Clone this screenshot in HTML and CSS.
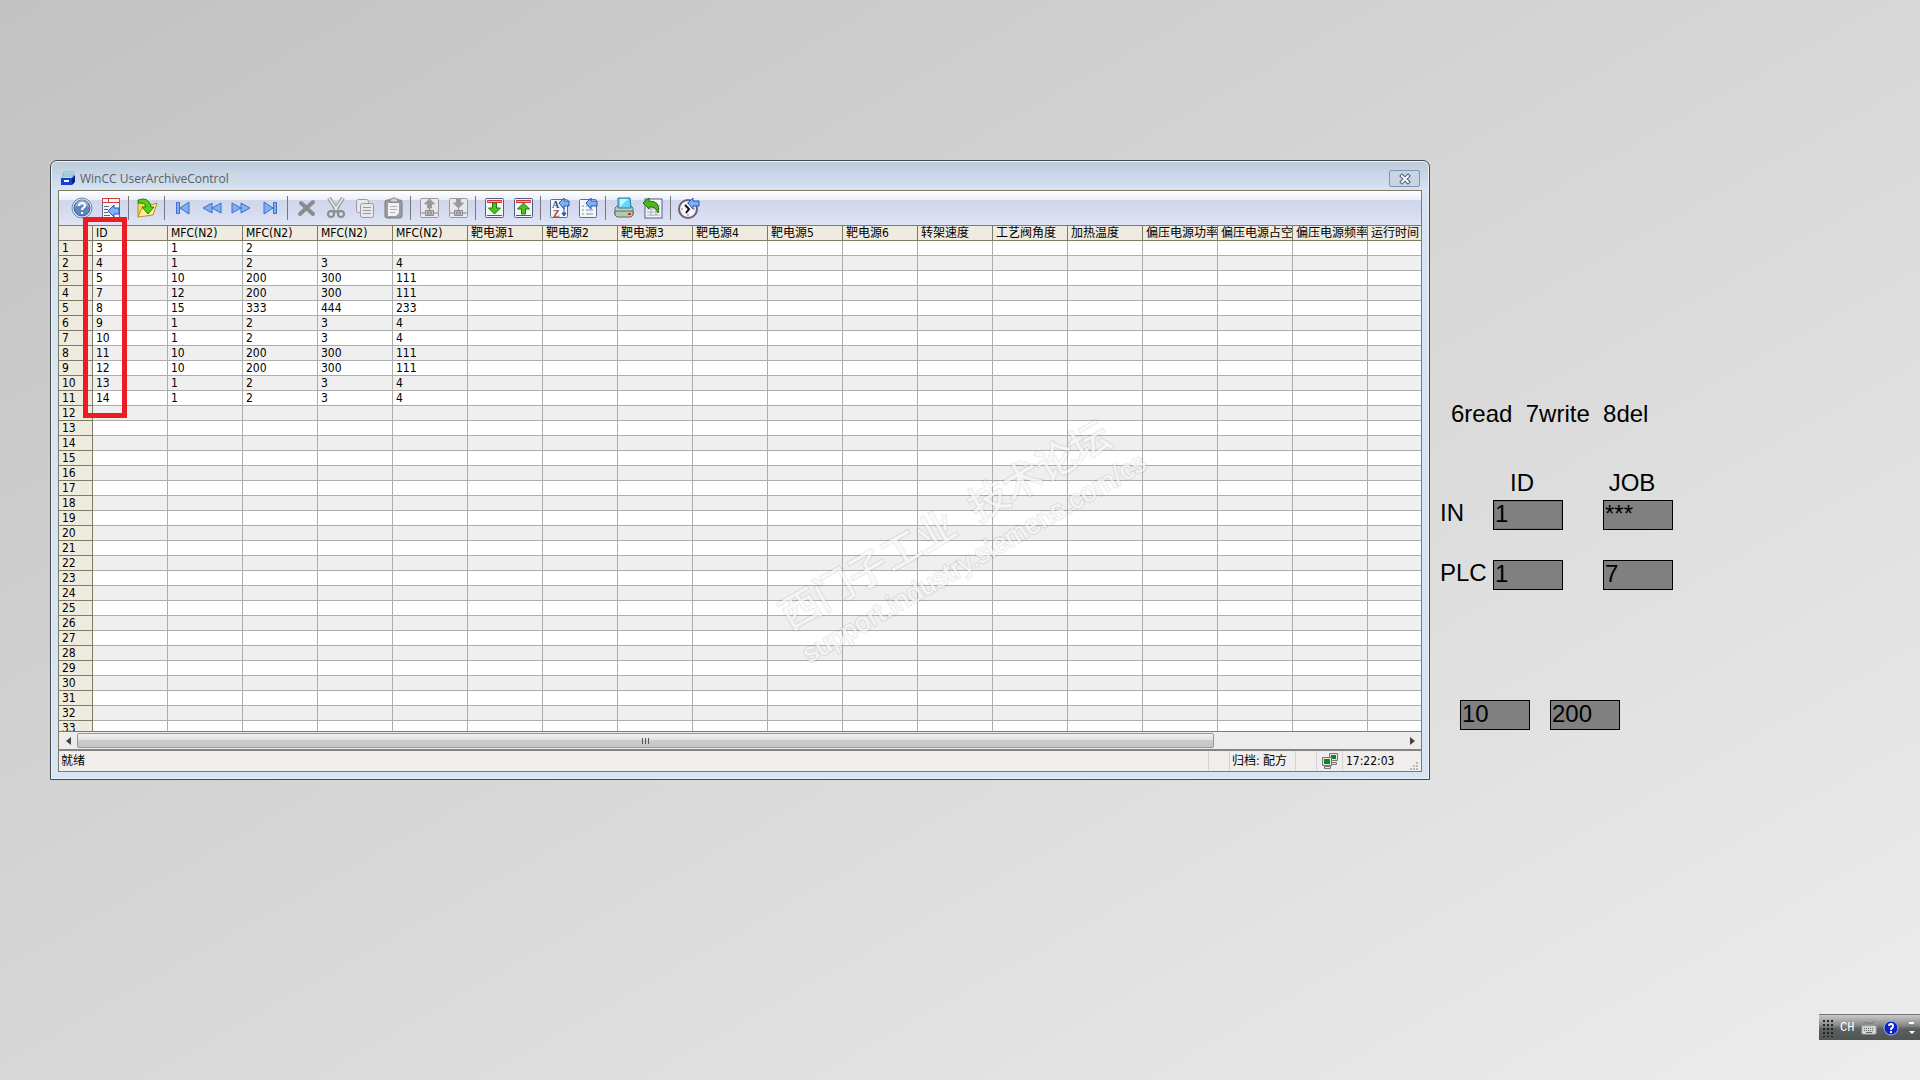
FILE: index.html
```html
<!DOCTYPE html>
<html lang="zh-CN">
<head>
    <meta charset="UTF-8">
    <title>WinCC UserArchiveControl</title>
    <link rel="stylesheet" href="styles.css">
</head>
<body>
    <div class="screen">
        <section class="window">
            <header class="titlebar">
                <svg class="title-icon" width="16" height="16" viewBox="0 0 16 16">
                    <path d="M4 1h10l-1 6H2z" fill="#e9f4fb" stroke="#8db3cc"/>
                    <path d="M3 3h10M3 5h10" stroke="#5aa5c8"/>
                    <path d="M1 7h11v7H1z" fill="#1a3fd0"/>
                    <path d="M12 7l3-3v7l-3 3z" fill="#0a1f8c"/>
                    <path d="M4 9h5v2H4z" fill="#fff"/>
                </svg>
                <h1>WinCC UserArchiveControl</h1>
                <button class="close" aria-label="关闭">
                    <svg width="14" height="12" viewBox="0 0 14 12">
                        <path d="M4 3l6 6M10 3l-6 6" stroke="#4d5a73" stroke-width="4" stroke-linecap="square"/>
                        <path d="M4 3l6 6M10 3l-6 6" stroke="#fff" stroke-width="2" stroke-linecap="square"/>
                    </svg>
                </button>
            </header>

            <div class="client">
                <div class="toolbar">
                    <button aria-label="帮助"><svg viewBox="0 0 22 22">
                        <circle cx="11" cy="11" r="10" fill="#e4eaf2" stroke="#6d87aa"/>
                        <circle cx="11" cy="11" r="8" fill="#5f86b8" stroke="#3d6296"/>
                        <path d="M4 10a7 7 0 0 1 14 0q-7-3-14 0z" fill="#8dabd0"/>
                        <path d="M8 9q0-3 3-3t3 3q0 1-2 2-1 1-1 2M11 15v2" fill="none" stroke="#fff" stroke-width="2"/>
                    </svg></button>
                    <button aria-label="选择归档"><svg viewBox="0 0 22 22">
                        <path d="M2.5 1.5h17v19h-17z" fill="#f5f7fb" stroke="#5b6f92"/>
                        <path d="M2.5 1.5h17v4h-17z" fill="#fff" stroke="#d43a3a"/>
                        <path d="M8.500 1v4" stroke="#d43a3a"/>
                        <path d="M4 9.500h5M4 12.500h4M4 15.500h4M4 18.500h6" stroke="#666"/>
                        <path d="M8 14l6-6v3h5v6h-5v3z" fill="#7fb2f5" stroke="#2757b5"/>
                    </svg></button>
                    <span class="sep"></span>
                    <button aria-label="读取变量"><svg viewBox="0 0 22 22">
                        <path d="M2 20V6h6l2 2h7v3" fill="#f5d85c" stroke="#b99017"/>
                        <path d="M2 20l4-9 15-5-4 12z" fill="#fdeea0" stroke="#b99017"/>
                        <path d="M2 3q11-4 13 7h3l-6 7-6-7h4q-1-5-8-4z" fill="#55cc16" stroke="#238209"/>
                    </svg></button>
                    <span class="sep"></span>
                    <button aria-label="第一行"><svg viewBox="0 0 22 22" class="nav">
                        <path d="M4.500 5.500h3v11h-3zM17 5v12L8 11z"/>
                    </svg></button>
                    <button aria-label="上一行"><svg viewBox="0 0 22 22" class="nav">
                        <path d="M11 6v10L2 11zM20 6v10l-9-5z"/>
                    </svg></button>
                    <button aria-label="下一行"><svg viewBox="0 0 22 22" class="nav">
                        <path d="M2 6v10l9-5zM11 6v10l9-5z"/>
                    </svg></button>
                    <button aria-label="最后一行"><svg viewBox="0 0 22 22" class="nav">
                        <path d="M5 5v12l9-6zM14.500 5.500h3v11h-3z"/>
                    </svg></button>
                    <span class="sep"></span>
                    <button aria-label="删除"><svg viewBox="0 0 22 22">
                        <path d="M6 6l12 11M18 5L5 17" stroke="#8b8b8d" stroke-width="4" stroke-linecap="round"/>
                    </svg></button>
                    <button aria-label="剪切"><svg viewBox="0 0 22 22">
                        <path d="M5 1l9 14M19 1L10 15" stroke="#929294" stroke-width="4"/>
                        <path d="M5 1l8 12M19 1l-8 12" stroke="#e6e6ea" stroke-width="2"/>
                        <circle cx="7" cy="17" r="3" fill="none" stroke="#8b8b8d" stroke-width="2"/>
                        <circle cx="17" cy="17" r="3" fill="none" stroke="#8b8b8d" stroke-width="2"/>
                    </svg></button>
                    <button aria-label="复制"><svg viewBox="0 0 22 22" class="gray">
                        <rect x="3.500" y="2.500" width="12" height="13" rx="2"/>
                        <rect x="7.500" y="6.500" width="13" height="14" rx="2"/>
                        <path d="M10 10.500h8M10 13.500h8M10 16.500h8"/>
                    </svg></button>
                    <button aria-label="粘贴"><svg viewBox="0 0 22 22">
                        <rect x="3" y="3" width="17" height="18" rx="2" fill="#9c9ca1" stroke="#7b7b80"/>
                        <path d="M6 6h11v10l-3 3H6z" fill="#f1f1f4"/>
                        <path d="M8 5V2h2q2-3 4 0h2v3z" fill="#d6d6da" stroke="#808085"/>
                        <path d="M8 9.500h7M8 12.500h7M8 15.500h5" stroke="#b4b4b8"/>
                    </svg></button>
                    <span class="sep"></span>
                    <button aria-label="读取"><svg viewBox="0 0 22 22" class="gray">
                        <rect x="2.500" y="1.500" width="18" height="19" rx="1"/>
                        <path d="M11.500 2l5 5h-3v4h-4V7h-3z" class="dark"/>
                        <path d="M7.500 13.500h8v5h-8zM3 16h4M16 16h4M11.500 11v2M9.500 15h4v2h-4z" class="plug"/>
                    </svg></button>
                    <button aria-label="写入"><svg viewBox="0 0 22 22" class="gray">
                        <rect x="2.500" y="1.500" width="18" height="19" rx="1"/>
                        <path d="M11.500 11l5-5h-3V2h-4v4h-3z" class="dark"/>
                        <path d="M7.500 13.500h8v5h-8zM3 16h4M16 16h4M11.500 11v2M9.500 15h4v2h-4z" class="plug"/>
                    </svg></button>
                    <span class="sep"></span>
                    <button aria-label="导入"><svg viewBox="0 0 22 22">
                        <rect x="2.500" y="1.500" width="18" height="19" rx="1" fill="#f3f6fb" stroke="#4d5f85"/>
                        <path d="M4.500 3.500h14v2h-14z" fill="#f3b4b4" stroke="#d42f2f"/>
                        <path d="M4 18.500h15" stroke="#2b59c9"/>
                        <path d="M9.500 6h4v5h4l-6 6-6-6h4z" fill="#4fc31b" stroke="#1d7c0b"/>
                    </svg></button>
                    <button aria-label="导出"><svg viewBox="0 0 22 22">
                        <rect x="2.500" y="1.500" width="18" height="19" rx="1" fill="#f3f6fb" stroke="#4d5f85"/>
                        <path d="M4.500 3.500h14v2h-14z" fill="#f3b4b4" stroke="#d42f2f"/>
                        <path d="M4 18.500h15" stroke="#2b59c9"/>
                        <path d="M9.500 17h4v-5h4l-6-6-6 6h4z" fill="#4fc31b" stroke="#1d7c0b"/>
                    </svg></button>
                    <span class="sep"></span>
                    <button aria-label="排序"><svg viewBox="0 0 22 22">
                        <rect x="2.500" y="2.500" width="17" height="18" rx="1" fill="#f3f6fb" stroke="#5b6f92"/>
                        <text x="4" y="11" class="az" fill="#2a4d8e">A</text>
                        <text x="5" y="20" class="az" fill="#a0442a">Z</text>
                        <path d="M16 10v8M14 16l2 3 2-3z" fill="#2757b5" stroke="#2757b5"/>
                        <path d="M11 6l5-5v3h5v5h-5v3z" fill="#7fb2f5" stroke="#2757b5"/>
                    </svg></button>
                    <button aria-label="选择"><svg viewBox="0 0 22 22">
                        <rect x="2.500" y="2.500" width="17" height="18" rx="1" fill="#f3f6fb" stroke="#5b6f92"/>
                        <path d="M5 9h2M9 9h3M5 13h2M9 13h7M5 17h2M9 17h7" stroke="#8d8d90"/>
                        <path d="M9 6l5-5v3h6v5h-6v3z" fill="#7fb2f5" stroke="#2757b5"/>
                    </svg></button>
                    <span class="sep"></span>
                    <button aria-label="打印"><svg viewBox="0 0 22 22">
                        <path d="M2 11l3-3h12l3 3v7H2z" fill="#c9ccc9" stroke="#636863"/>
                        <path d="M5 1h12l1 10H5z" fill="#67d5f5" stroke="#207fa6"/>
                        <path d="M7 2h8l-8 8z" fill="#c6f3fd"/>
                        <path d="M2 14h18v4l-2 2H4l-2-2z" fill="#b4c9b4" stroke="#557055"/>
                        <path d="M15 16h3v2h-3z" fill="#e22"/>
                    </svg></button>
                    <button aria-label="时基"><svg viewBox="0 0 22 22">
                        <rect x="3" y="2" width="17" height="19" fill="#f3f6fb" stroke="#4d5f85"/>
                        <path d="M5 9h13M5 12h13M5 15h13M5 18h13M9 5v14M14 5v14" stroke="#a9adb5"/>
                        <path d="M1 6l6-5v3q12 0 9 12-2-7-9-6v2z" fill="#4fb81b" stroke="#1d6f0b"/>
                    </svg></button>
                    <span class="sep"></span>
                    <button aria-label="时间选择"><svg viewBox="0 0 22 22">
                        <circle cx="10" cy="12" r="9" fill="#f7f4fa" stroke="#6b5b78" stroke-width="2"/>
                        <path d="M10 5v2M10 17v2M3 12h2M15 12h2" stroke="#8d8098"/>
                        <path d="M7 8l4 4-3 4" fill="none" stroke="#111" stroke-width="2"/>
                        <path d="M10 6l5-5v3h6v5h-6v3z" fill="#7fb2f5" stroke="#2757b5"/>
                    </svg></button>
                </div>

                <div class="grid-view">
                    <table class="archive">
                        <thead><tr id="columns"></tr></thead>
                        <tbody id="rows"></tbody>
                    </table>
                </div>

                <div class="scrollbar">
                    <button class="arrow" aria-label="向左滚动"><svg width="5" height="8" viewBox="0 0 5 8"><path d="M5 0v8L0 4z" fill="#444"/></svg></button>
                    <div class="track">
                        <div class="thumb"><i></i><i></i><i></i></div>
                    </div>
                    <button class="arrow" aria-label="向右滚动"><svg width="5" height="8" viewBox="0 0 5 8"><path d="M0 0v8l5-4z" fill="#444"/></svg></button>
                </div>

                <footer class="statusbar">
                    <span class="state">就绪</span>
                    <span class="cell blank"></span>
                    <span class="cell name">归档: 配方</span>
                    <span class="cell blank"></span>
                    <span class="cell link">
                        <svg width="16" height="16" viewBox="0 0 16 16">
                            <path d="M7.500.5h8v7h-8zM9.500 9.500h5v2h-5z" fill="#e4e4e4" stroke="#777"/>
                            <path d="M9 2h5v4H9z" fill="#0a8a1c"/>
                            <path d="M.5 4.500h9v8h-9zM2.500 13.500h6v2h-6z" fill="#e4e4e4" stroke="#777"/>
                            <path d="M2 6h6v5H2z" fill="#0a8a1c"/>
                        </svg>
                    </span>
                    <span class="cell clock">17:22:03
                        <svg class="grip" width="9" height="9" viewBox="0 0 9 9"><path d="M7 0h2v2H7zM4 3h2v2H4zM7 3h2v2H7zM1 6h2v2H1zM4 6h2v2H4zM7 6h2v2H7z" fill="#bdb9b7"/></svg>
                    </span>
                </footer>
            </div>

            <div class="marker"></div>
            <div class="watermark">
                <p class="forum">西门子工业&nbsp; 技术论坛</p>
                <p class="site">support.industry.siemens.com/cs</p>
            </div>
        </section>

        <aside class="panel">
            <p class="hint">6read&nbsp; 7write&nbsp; 8del</p>
            <div class="io">
                <span></span>
                <span class="head">ID</span>
                <span class="head">JOB</span>
                <span id="in">IN</span>
                <input class="focused" type="text" value="1" aria-labelledby="in">
                <input type="text" value="***" aria-labelledby="in">
                <span id="plc">PLC</span>
                <input type="text" value="1" aria-labelledby="plc">
                <input type="text" value="7" aria-labelledby="plc">
            </div>
            <div class="values">
                <input type="text" value="10" aria-label="MFC 1">
                <input type="text" value="200" aria-label="MFC 2">
            </div>
        </aside>
    </div>

    <div class="langbar">
        <svg class="dots" width="10" height="18" viewBox="0 0 10 18">
            <path d="M1 1v17M5 1v17M9 1v17" stroke="#222" stroke-width="2" stroke-dasharray="2 2"/>
        </svg>
        <span class="lang">CH</span>
        <button aria-label="键盘"><svg width="16" height="16" viewBox="0 0 16 16">
            <path d="M2 4q3-3 6-1t6-2" fill="none" stroke="#777"/>
            <rect x="1" y="6" width="14" height="8" rx="1" fill="#d8d8d4" stroke="#b5b5b0"/>
            <path d="M3 8.500h10M3 10.500h10" stroke="#666" stroke-dasharray="1 1"/>
            <path d="M5 12.500h6" stroke="#666"/>
        </svg></button>
        <button aria-label="帮助"><svg width="16" height="16" viewBox="0 0 16 16">
            <circle cx="8" cy="8" r="7" fill="#0b1fd0" stroke="#a9b4c8"/>
            <path d="M6 6q0-2 2-2t2 2q0 1-1 2-1 0-1 2M8 11v2" fill="none" stroke="#fff" stroke-width="2"/>
        </svg></button>
        <button class="options" aria-label="选项"><svg width="6" height="14" viewBox="0 0 6 14">
            <path d="M0 1h5v2H0zM0 10h6l-3 3z" fill="#fff"/>
        </svg></button>
    </div>

    <script>
        const columns = ['ID', 'MFC(N2)', 'MFC(N2)', 'MFC(N2)', 'MFC(N2)',
            '靶电源1', '靶电源2', '靶电源3', '靶电源4', '靶电源5', '靶电源6',
            '转架速度', '工艺阀角度', '加热温度',
            '偏压电源功率', '偏压电源占空', '偏压电源频率', '运行时间'];
        const records = [
            [3, 1, 2],
            [4, 1, 2, 3, 4],
            [5, 10, 200, 300, 111],
            [7, 12, 200, 300, 111],
            [8, 15, 333, 444, 233],
            [9, 1, 2, 3, 4],
            [10, 1, 2, 3, 4],
            [11, 10, 200, 300, 111],
            [12, 10, 200, 300, 111],
            [13, 1, 2, 3, 4],
            [14, 1, 2, 3, 4]
        ];

        document.getElementById('columns').innerHTML =
            '<th class="num"></th>' + columns.map(name => `<th>${name}</th>`).join('');

        let html = '';
        for (let i = 0; i < 33; i++) {
            const record = records[i] || [];
            html += `<tr><th class="num">${i + 1}</th>`;
            html += columns.map((name, c) => `<td>${record[c] ?? ''}</td>`).join('');
            html += '</tr>';
        }
        document.getElementById('rows').innerHTML = html;
    </script>
</body>
</html>
```
FILE: styles.css
```css
* {
    box-sizing: border-box;
}

body {
    margin: 0;
    font-family: "DejaVu Sans Condensed", "Noto Sans CJK SC", sans-serif;
    font-size: 12px;
    color: #000;
    background: linear-gradient(to bottom right, #c2c2c2, #ededed);
}

h1, p {
    margin: 0;
}

button {
    padding: 0;
    border: none;
    background: none;
}

.screen {
    display: flex;
    height: 100vh;
    padding: 160px 0 300px 50px;
}

/* archive window */
.window {
    position: relative;
    flex: 1;
    min-width: 0;
    display: flex;
    flex-direction: column;
    padding: 0 7px 7px;
    border: 1px solid #45484d;
    border-radius: 7px 7px 0 0;
    background: linear-gradient(#bccbdb, #d7e4f2 30px);
    box-shadow: inset 0 0 0 1px #e9f1f9;
}

.titlebar {
    display: flex;
    align-items: center;
    height: 29px;
    padding: 6px 2px 0;
}

.title-icon {
    margin-right: 4px;
}

.titlebar h1 {
    flex: 1;
    font: 12px "Open Sans", sans-serif;
    color: #56606c;
}

.close {
    display: flex;
    align-items: center;
    justify-content: center;
    width: 31px;
    height: 17px;
    border: 1px solid #8293ad;
    border-radius: 2px;
    background: #c6d4e4;
}

.client {
    flex: 1;
    min-height: 0;
    display: flex;
    flex-direction: column;
    border: 1px solid #7c7c66;
    background: #f0edec;
}

.toolbar {
    display: flex;
    align-items: center;
    height: 35px;
    padding-left: 8px;
    border-bottom: 1px solid #7c7c66;
    background: linear-gradient(#fff, #eceff9 9px, #d1d7eb 9px, #d5daee 20px, #dfe4f6);
}

.toolbar button {
    display: flex;
    justify-content: center;
    width: 29px;
}

.toolbar button svg {
    width: 22px;
    height: 22px;
}

.sep {
    width: 1px;
    height: 24px;
    margin: 0 3px;
    background: #77787f;
}

.nav path {
    fill: #7fb0f0;
    stroke: #3b6fd0;
}

.gray * {
    fill: #e8e8ec;
    stroke: #9a9a9f;
}

.gray .dark {
    fill: #98989c;
}

.gray .plug {
    fill: #c4c4c8;
    stroke: #8b8b8f;
}

.az {
    font: bold 10px "Liberation Serif", serif;
}

/* data grid */
.grid-view {
    flex: 1;
    min-height: 0;
    overflow: hidden;
    border-bottom: 1px solid #7c7c66;
    background: #fff;
}

.archive {
    width: 1384px;
    table-layout: fixed;
    border-collapse: separate;
    border-spacing: 0;
}

.archive th, .archive td {
    height: 15px;
    padding: 1px 0 0 3px;
    border-right: 1px solid #adadad;
    border-bottom: 1px solid #adadad;
    font-weight: normal;
    line-height: 13px;
    text-align: left;
    white-space: nowrap;
    overflow: hidden;
}

.archive th {
    border-color: #7c7c66;
    background: #efebde;
}

.archive .num {
    width: 34px;
}

.archive tbody tr:nth-child(even) td {
    background: #efefef;
}

.scrollbar {
    display: flex;
    height: 17px;
    background: #ececec;
}

.arrow {
    display: flex;
    align-items: center;
    justify-content: center;
    width: 18px;
}

.track {
    flex: 1;
    padding: 1px 0;
}

.thumb {
    display: flex;
    align-items: center;
    justify-content: center;
    gap: 2px;
    width: calc(100% * 6 / 7);
    height: 15px;
    border: 1px solid #979797;
    border-radius: 2px;
    background: linear-gradient(#f2f2f2, #e2e2e3 45%, #c9cbcd 50%, #c3c4c6);
}

.thumb i {
    width: 1px;
    height: 6px;
    background: #555;
}

.statusbar {
    display: flex;
    height: 22px;
    border-top: 2px solid #85857c;
    line-height: 21px;
}

.state {
    flex: 1;
    padding-left: 2px;
}

.cell {
    border-left: 1px solid #d6d2d0;
}

.blank {
    width: 21px;
}

.name {
    width: 66px;
    padding-left: 2px;
}

.link {
    display: flex;
    align-items: center;
    width: 26px;
    padding-left: 5px;
}

.clock {
    display: flex;
    justify-content: space-between;
    width: 79px;
    padding: 0 3px;
}

.grip {
    align-self: flex-end;
}

/* red frame round the ID column */
.marker {
    position: absolute;
    left: 32px;
    top: 56px;
    width: 44px;
    height: 201px;
    border: 5px solid #ed1c24;
}

.watermark {
    position: absolute;
    left: 715px;
    top: 332px;
    width: 400px;
    color: rgba(255, 255, 255, 0.7);
    white-space: nowrap;
    transform: rotate(-30deg);
    -webkit-text-stroke: 3px rgba(0, 0, 0, 0.08);
    paint-order: stroke fill;
    pointer-events: none;
}

.forum {
    font-size: 39px;
    line-height: 48px;
}

.site {
    font: 27px "Liberation Sans", sans-serif;
    line-height: 36px;
}

/* I/O fields beside the window */
.panel {
    width: 490px;
    padding-top: 240px;
    font: 24px "Liberation Sans", Arial, sans-serif;
    line-height: 28px;
}

.hint {
    margin: 0 0 42px 21px;
}

.io {
    display: grid;
    grid-template-columns: 53px 110px 110px;
    grid-template-rows: 30px 60px 30px;
    margin-left: 10px;
    line-height: 26px;
}

.io .head {
    width: 70px;
    padding-right: 12px;
    text-align: center;
}

.panel input {
    width: 70px;
    height: 30px;
    padding: 0 1px 2px;
    border: 1px solid #000;
    border-radius: 0;
    outline: none;
    background: #808080;
    font: inherit;
}

.panel .focused {
    box-shadow: inset 0 0 0 1px #707070;
}

.values {
    display: flex;
    gap: 20px;
    margin: 110px 0 0 30px;
}

/* language bar */
.langbar {
    position: absolute;
    right: 0;
    bottom: 40px;
    display: flex;
    align-items: center;
    width: 101px;
    height: 26px;
    padding: 0 5px 0 4px;
    border-top: 1px solid #777;
    background: linear-gradient(#c9c9c9, #8a8c8c 10px, #5c5f5f 14px, #505454);
    color: #fff;
}

.lang {
    flex: 1;
    padding-left: 7px;
    font: 12px "Liberation Mono", monospace;
}

.langbar button {
    display: flex;
    margin-right: 6px;
}

.langbar .options {
    margin: 0 0 0 4px;
}
```
